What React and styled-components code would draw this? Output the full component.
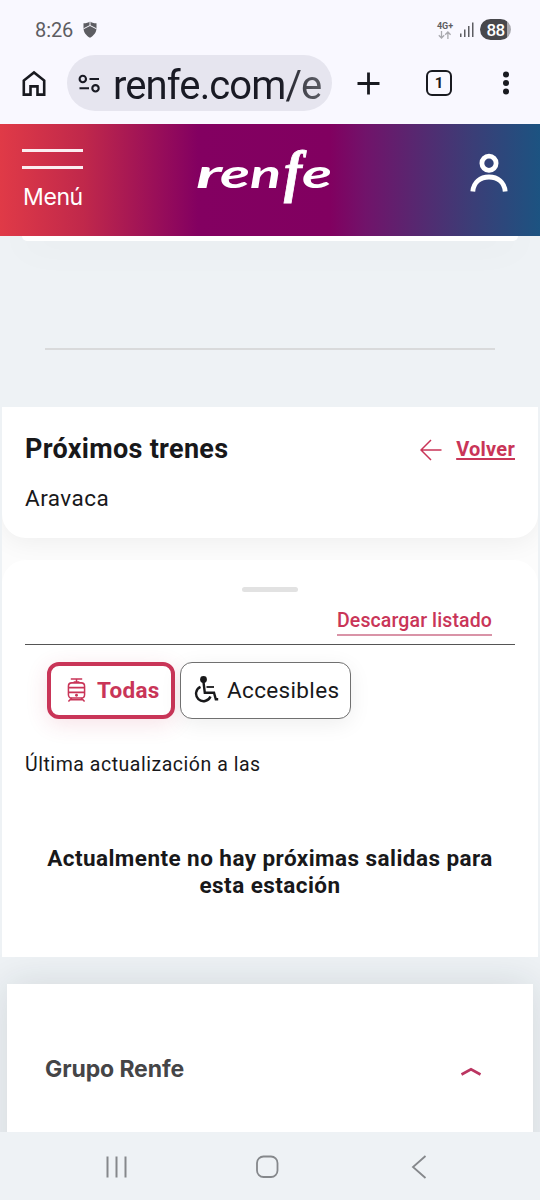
import React from 'react';
import styled, { createGlobalStyle } from 'styled-components';

const Global = createGlobalStyle`
  * { box-sizing: border-box; }
  body { margin: 0; background: #eef2f5; }
  svg { display: block; flex: none; }
  h1, h2, p { margin: 0; }
  button { border: 0; background: none; padding: 0; font: inherit; color: inherit; }
`;

const Screen = styled.div`
  width: 540px;
  height: 1200px;
  overflow: hidden;
  display: flex;
  flex-direction: column;
  background: #eef2f5;
  color: #18181a;
  font-family: Roboto, "Liberation Sans", sans-serif;
`;

const StatusBar = styled.div`
  height: 54px;
  flex: none;
  display: flex;
  align-items: center;
  padding: 5px 29px 0 35px;
  background: #f9f8ff;
  color: #5d5d62;
`;

const Clock = styled.span`
  font-size: 20px;
  line-height: 24px;
  letter-spacing: -0.1px;
  width: 48px;
`;

const Network = styled.div`
  margin-left: auto;
  width: 18px;
  display: flex;
  flex-direction: column;
  align-items: center;
  font-size: 9px;
  font-weight: 700;
  line-height: 10px;
`;

const Battery = styled.div`
  width: 31px;
  height: 21px;
  margin-left: 5px;
  border-radius: 11px;
  background: linear-gradient(90deg, #48484c 88%, #a9a9af 88%);
  color: #fff;
  font-size: 17px;
  font-weight: 500;
  line-height: 22px;
  letter-spacing: -0.7px;
  text-align: center;
`;

const Toolbar = styled.div`
  height: 70px;
  flex: none;
  display: flex;
  align-items: flex-start;
  padding: 1px 20px 0 20px;
  background: #f9f8ff;
`;

const ToolIcon = styled.div`
  height: 56px;
  width: ${(p) => p.$width}px;
  margin-left: ${(p) => p.$gap || 0}px;
  display: flex;
  align-items: center;
  justify-content: center;
`;

const AddressBar = styled.div`
  width: 265px;
  height: 56px;
  margin-left: 19px;
  padding: 1px 10px 0 11px;
  border-radius: 28px;
  background: #e6e5ef;
  display: flex;
  align-items: center;
  gap: 12px;
`;

const Url = styled.div`
  width: 209px;
  white-space: nowrap;
  font-family: Roboto, sans-serif;
  font-size: 40px;
  line-height: 52px;
  padding-top: 5px;
  letter-spacing: -0.9px;
  background: linear-gradient(90deg, #191a24 80%, #55565e 96%);
  background-clip: text;
  color: transparent;
`;

const TabCount = styled.div`
  width: 26px;
  height: 26px;
  border: 2.500px solid #191a20;
  border-radius: 6px;
  color: #191a20;
  font-size: 15px;
  font-weight: 700;
  line-height: 22px;
  text-align: center;
`;

const SiteHeader = styled.header`
  height: 112px;
  flex: none;
  z-index: 1;
  display: flex;
  align-items: flex-start;
  padding: 25px 32px 0 22px;
  background: linear-gradient(90deg, #e03a47 0, #c0284b 84px, #830061 198px, #810060 330px, #71136a 365px, #3d3c76 468px, #1c5381 540px);
  color: #fff;
`;

const MenuButton = styled.button`
  width: 61px;
  display: flex;
  flex-direction: column;
  font-family: Inter, sans-serif;
  font-size: 23px;
  line-height: 28px;
  text-align: left;
`;

const MenuLine = styled.span`
  height: 3px;
  margin-bottom: ${(p) => p.$after}px;
  background: #fbeef1;
`;

const MenuLabel = styled.span`
  padding-left: 1px;
  letter-spacing: -0.4px;
`;

const LogoLink = styled.a`
  margin: 2px auto 0 113px;
`;

const Page = styled.main`
  height: 896px;
  flex: none;
  overflow: hidden;
  display: flex;
  flex-direction: column;
`;

const CardEdge = styled.div`
  height: 5px;
  flex: none;
  margin: 0 22px;
  border-radius: 0 0 12px 12px;
  background: #fff;
  box-shadow: 0 0 38px rgba(25, 40, 50, 0.13);
`;

const Rule = styled.hr`
  width: 450px;
  height: 2px;
  flex: none;
  border: 0;
  margin: ${(p) => p.$top}px auto 0;
  background: #d9dadb;
`;

const Panel = styled.section`
  width: 536px;
  height: 550px;
  flex: none;
  margin: 57px auto 0;
  overflow: hidden;
  display: flex;
  flex-direction: column;
  gap: 22px;
  background: #fcfcfc;
`;

const StationCard = styled.div`
  height: 131px;
  flex: none;
  padding: 27px 23px 0;
  border-radius: 0 0 24px 24px;
  background: #fff;
  box-shadow: 0 4px 26px rgba(0, 0, 0, 0.06);
`;

const StationHead = styled.div`
  display: flex;
  justify-content: space-between;
  align-items: center;
`;

const Title = styled.h1`
  font-size: 27px;
  font-weight: 700;
  line-height: 31px;
  letter-spacing: 0.3px;
`;

const BackLink = styled.a`
  display: flex;
  align-items: center;
  gap: 14px;
  color: #c93558;
  font-size: 20px;
  font-weight: 700;
  line-height: 25px;
  letter-spacing: 0.25px;
`;

const Underlined = styled.span`
  text-decoration: underline;
  text-decoration-thickness: 1.5px;
  text-underline-offset: 2px;
  text-decoration-skip-ink: none;
`;

const Station = styled.p`
  margin-top: 19px;
  font-size: 22.5px;
  line-height: 28px;
  letter-spacing: 0.45px;
`;

const TrainsCard = styled.div`
  flex: 1;
  z-index: 1;
  display: flex;
  flex-direction: column;
  padding: 27px 23px 0;
  border-radius: 24px 24px 0 0;
  background: #fff;
`;

const Handle = styled.div`
  width: 56px;
  height: 5px;
  align-self: center;
  border-radius: 3px;
  background: #e2e2e2;
`;

const DownloadRow = styled.div`
  height: 53px;
  padding: 16px 23px 0 0;
  display: flex;
  justify-content: flex-end;
  align-items: flex-start;
  border-bottom: 1px solid #555;
`;

const DownloadLink = styled.a`
  height: 28px;
  border-bottom: 2px solid #d993a7;
  color: #c93558;
  font-size: 19.5px;
  font-weight: 500;
  line-height: 25px;
  letter-spacing: 0.12px;
`;

const Filters = styled.div`
  display: flex;
  gap: 5px;
  margin: 17px 0 0 22px;
`;

const FilterButton = styled.button`
  width: ${(p) => p.$width}px;
  height: 57px;
  display: flex;
  align-items: center;
  justify-content: flex-start;
  padding: 0 0 2px ${(p) => (p.$active ? 16 : 13)}px;
  gap: ${(p) => (p.$active ? 11 : 8)}px;
  border: ${(p) => (p.$active ? '4px solid #c93558' : '1px solid #707070')};
  border-radius: 12px;
  background: #fff;
  color: ${(p) => (p.$active ? '#c93558' : '#18181a')};
  box-shadow: 0 5px 22px ${(p) => (p.$active ? 'rgba(201, 53, 88, 0.14)' : 'rgba(0, 0, 0, 0.07)')};
  font-size: 22.5px;
  font-weight: ${(p) => (p.$active ? 700 : 400)};
  letter-spacing: 0.35px;
`;

const Updated = styled.p`
  margin-top: 33px;
  font-size: 19.5px;
  line-height: 26px;
  letter-spacing: 0.53px;
`;

const EmptyNotice = styled.p`
  margin-top: 67px;
  font-size: 22.5px;
  font-weight: 700;
  line-height: 26.5px;
  letter-spacing: 0.44px;
  text-align: center;
`;

const FooterCard = styled.footer`
  width: 526px;
  height: 190px;
  flex: none;
  margin: 27px auto 0;
  padding: 70px 51px 0 38px;
  display: flex;
  justify-content: space-between;
  align-items: flex-start;
  background: #fff;
  box-shadow: 0 0 38px rgba(25, 40, 50, 0.13);
`;

const FooterTitle = styled.h2`
  color: #454547;
  font-family: Inter, sans-serif;
  font-size: 23px;
  font-weight: 700;
  line-height: 30px;
  letter-spacing: -0.1px;
`;

const ChevronSlot = styled.div`
  padding-top: 12px;
`;

const SystemNav = styled.nav`
  flex: 1;
  display: flex;
  align-items: center;
  padding: 2px 0 0 105px;
  background: #eef2f5;
`;

const NavItem = styled.div`
  margin-left: ${(p) => p.$gap || 0}px;
`;

const ShieldIcon = () => (
  <svg width="14" height="17" viewBox="0 0 14 17">
    <path d="M7 .5C8.500 1.500 10.600 2.300 13.500 2.300v4.500c0 4.700-2.700 7.800-6.500 10-3.800-2.200-6.500-5.300-6.500-10V2.300C3.400 2.300 5.500 1.500 7 .5Z" fill="#5d5d62" />
    <path d="M7 0v4.500M7 4.500 0.500 7.800M7 4.500l6.500 3.300" stroke="#f9f8ff" strokeWidth="1" />
  </svg>
);

const DataArrows = () => (
  <svg width="14" height="8" viewBox="0 0 14 8" fill="none" stroke="#a9a9af" strokeWidth="1.3">
    <path d="M3.500 0v7M.8 4.300l2.700 2.700 2.700-2.700M9.900 8V1M7.200 3.700 9.900 1l2.700 2.700" />
  </svg>
);

const SignalIcon = () => (
  <svg width="15" height="15" viewBox="0 0 15 15" fill="#5d5d62">
    <rect x="0" y="11.500" width="1.500" height="3.500" />
    <rect x="4" y="7.500" width="1.500" height="7.500" />
    <rect x="8" y="4" width="1.500" height="11" />
    <rect x="12" y="0.500" width="1.500" height="14.500" />
  </svg>
);

const HomeIcon = () => (
  <svg width="28" height="28" viewBox="0 0 28 28" fill="none" stroke="#191a20" strokeWidth="2.600">
    <path d="M3.800 25.600V11.600L14 3.500l10.200 8.100v14h-6.700v-8.200h-7v8.200Z" />
  </svg>
);

const SiteSettingsIcon = () => (
  <svg width="23" height="20" viewBox="0 0 23 20" fill="none" stroke="#191a24" strokeWidth="2.100">
    <circle cx="4.800" cy="5" r="3.200" />
    <path d="M11.500 5H21M1.500 14.300H11" />
    <circle cx="17.500" cy="14.300" r="3.200" />
  </svg>
);

const PlusIcon = () => (
  <svg width="23" height="23" viewBox="0 0 23 23" stroke="#191a20" strokeWidth="2.800">
    <path d="M11.500 0.500v22M.5 11.500h22" />
  </svg>
);

const MoreIcon = () => (
  <svg width="6" height="24" viewBox="0 0 6 24" fill="#191a20">
    <circle cx="3" cy="3.500" r="3" />
    <circle cx="3" cy="12" r="3" />
    <circle cx="3" cy="20.500" r="3" />
  </svg>
);

const Logo = () => (
  <svg width="138" height="56" viewBox="0 0 138 56" overflow="visible" fill="#fff" fontFamily="Lato, sans-serif" fontWeight="700" fontStyle="italic">
    <text fontSize="41" y="37">
      <tspan x="0" textLength="26" lengthAdjust="spacingAndGlyphs">r</tspan>
      <tspan x="24" textLength="30" lengthAdjust="spacingAndGlyphs">e</tspan>
      <tspan x="54" textLength="31" lengthAdjust="spacingAndGlyphs">n</tspan>
      <tspan x="88" y="40" fontFamily="Liberation Serif, serif" fontSize="56" textLength="18" lengthAdjust="spacingAndGlyphs" stroke="#fff" strokeWidth="0.8">f</tspan>
      <tspan x="106" y="37" textLength="30" lengthAdjust="spacingAndGlyphs">e</tspan>
    </text>
  </svg>
);

const UserIcon = () => (
  <svg width="38" height="43" viewBox="0 0 38 43" fill="none" stroke="#fff" strokeWidth="4.800">
    <circle cx="19" cy="14.200" r="7.100" />
    <path d="M2.800 42.500C3.500 33.200 10.300 28 19 28S34.500 33.200 35.200 42.500" />
  </svg>
);

const ArrowLeftIcon = () => (
  <svg width="22" height="22" viewBox="0 0 22 22" fill="none" stroke="#c93558" strokeWidth="1.500">
    <path d="M11 1 1 11l10 10M1 11h20.500" />
  </svg>
);

const TrainIcon = () => (
  <svg width="19" height="26" viewBox="0 0 20 26" fill="none" stroke="#c93558" strokeWidth="1.600">
    <path d="M4 1.500h12M10 1.500v4M7 4.500h6M1.500 10.500h17M1.500 15.500h17" />
    <rect x="1.500" y="5.500" width="17" height="16" rx="3.500" />
    <path d="M5 21.500 1.500 25.200M15 21.500l3.500 3.700M3.500 23.200h13" />
    <circle cx="10" cy="18.500" r="1.500" fill="#c93558" stroke="none" />
  </svg>
);

const WheelchairIcon = () => (
  <svg width="25" height="27" viewBox="0 0 25 27" fill="none" stroke="#18181a" strokeWidth="2.400">
    <circle cx="9.500" cy="3.500" r="3.400" fill="#18181a" stroke="none" />
    <path d="M9.500 6 10.800 16.800H20l1.800 6.500h2.400" />
    <path d="M12.500 11H20" strokeWidth="1.800" />
    <path d="M6.500 10.800A7.500 7.500 0 1 0 16.500 20.500" />
  </svg>
);

const ChevronUpIcon = () => (
  <svg width="22" height="10" viewBox="0 0 22 10" fill="none" stroke="#bb3561" strokeWidth="2.600">
    <path d="m1.500 8.500 9.500-5.200 9.500 5.200" />
  </svg>
);

const RecentsIcon = () => (
  <svg width="23" height="22" viewBox="0 0 23 22" stroke="#85888b" strokeWidth="2">
    <path d="M2.500 0.500v21M11.500 0.500v21M20.500 0.500v21" />
  </svg>
);

const HomeNavIcon = () => (
  <svg width="24" height="24" viewBox="0 0 24 24" fill="none" stroke="#85888b" strokeWidth="1.800">
    <rect x="2" y="1.500" width="20.500" height="20.500" rx="6.500" />
  </svg>
);

const BackNavIcon = () => (
  <svg width="16" height="24" viewBox="0 0 16 24" fill="none" stroke="#85888b" strokeWidth="1.800">
    <path d="M14.500 1 2 12l12.500 11" />
  </svg>
);

export default function App() {
  return (
    <Screen>
      <Global />
      <StatusBar>
        <Clock>8:26</Clock>
        <ShieldIcon />
        <Network>4G+<DataArrows /></Network>
        <ToolIcon $width={15} $gap={6}><SignalIcon /></ToolIcon>
        <Battery>88</Battery>
      </StatusBar>
      <Toolbar>
        <ToolIcon $width={28}><HomeIcon /></ToolIcon>
        <AddressBar>
          <SiteSettingsIcon />
          <Url>renfe.com/e</Url>
        </AddressBar>
        <ToolIcon $width={24} $gap={24}><PlusIcon /></ToolIcon>
        <ToolIcon $width={26} $gap={46}><TabCount>1</TabCount></ToolIcon>
        <ToolIcon $width={6} $gap={51}><MoreIcon /></ToolIcon>
      </Toolbar>
      <SiteHeader>
        <MenuButton>
          <MenuLine $after={14} />
          <MenuLine $after={14} />
          <MenuLabel>Menú</MenuLabel>
        </MenuButton>
        <LogoLink><Logo /></LogoLink>
        <UserIcon />
      </SiteHeader>
      <Page>
        <CardEdge />
        <Rule $top={107} />
        <Panel>
          <StationCard>
            <StationHead>
              <Title>Próximos trenes</Title>
              <BackLink>
                <ArrowLeftIcon />
                <Underlined>Volver</Underlined>
              </BackLink>
            </StationHead>
            <Station>Aravaca</Station>
          </StationCard>
          <TrainsCard>
            <Handle />
            <DownloadRow>
              <DownloadLink>Descargar listado</DownloadLink>
            </DownloadRow>
            <Filters>
              <FilterButton $active $width={128}><TrainIcon />Todas</FilterButton>
              <FilterButton $width={171}><WheelchairIcon />Accesibles</FilterButton>
            </Filters>
            <Updated>Última actualización a las</Updated>
            <EmptyNotice>Actualmente no hay próximas salidas para esta estación</EmptyNotice>
          </TrainsCard>
        </Panel>
        <FooterCard>
          <FooterTitle>Grupo Renfe</FooterTitle>
          <ChevronSlot><ChevronUpIcon /></ChevronSlot>
        </FooterCard>
      </Page>
      <SystemNav>
        <NavItem><RecentsIcon /></NavItem>
        <NavItem $gap={127}><HomeNavIcon /></NavItem>
        <NavItem $gap={132}><BackNavIcon /></NavItem>
      </SystemNav>
    </Screen>
  );
}
